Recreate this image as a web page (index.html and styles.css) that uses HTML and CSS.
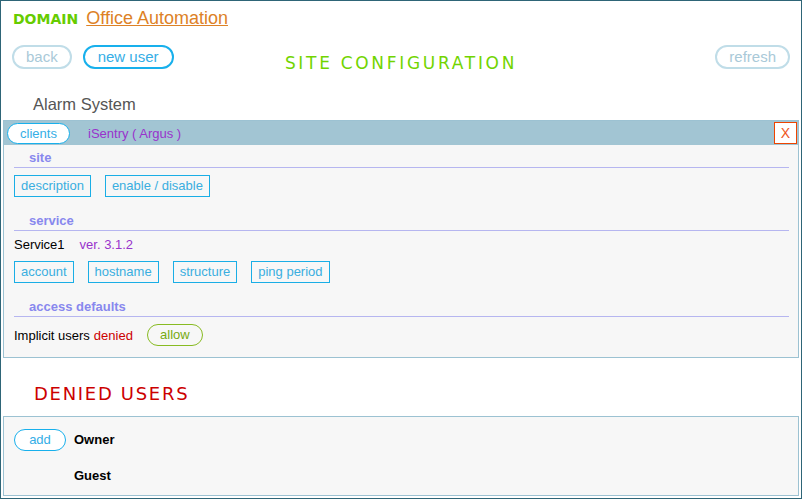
FILE: index.html
```html
<!DOCTYPE html>
<html>
<head>
<meta charset="utf-8">
<link rel="stylesheet" href="styles.css">
</head>
<body>
<div class="frame">
  <div class="domain">
    <span class="domain-label">DOMAIN</span>
    <a class="domain-name" href="#">Office Automation</a>
  </div>
  <div class="toolbar">
    <div class="tb-left">
      <span class="pill pill-muted">back</span>
      <span class="pill pill-wide">new user</span>
    </div>
    <div class="page-title">SITE CONFIGURATION</div>
    <div class="tb-right">
      <span class="pill pill-muted">refresh</span>
    </div>
  </div>
  <div class="system-name">Alarm System</div>

  <div class="panel">
    <div class="panel-head">
      <span class="pill pill-small">clients</span>
      <span class="client-name">iSentry ( Argus )</span>
      <span class="close-btn">X</span>
    </div>

    <div class="sec-title">site</div>
    <div class="btn-row">
      <span class="rbtn">description</span>
      <span class="rbtn">enable / disable</span>
    </div>

    <div class="sec-title">service</div>
    <div class="info-row">
      <span class="plain">Service1</span>
      <span class="version">ver. 3.1.2</span>
    </div>
    <div class="btn-row">
      <span class="rbtn">account</span>
      <span class="rbtn">hostname</span>
      <span class="rbtn">structure</span>
      <span class="rbtn">ping period</span>
    </div>

    <div class="sec-title">access defaults</div>
    <div class="access-row">
      <span class="plain">Implicit users</span>
      <span class="denied">denied</span>
      <span class="pill pill-small pill-green">allow</span>
    </div>
  </div>

  <div class="denied-title">DENIED USERS</div>

  <div class="panel panel-users">
    <div class="users">
      <span class="pill pill-small">add</span>
      <span class="user">Owner</span>
      <span></span>
      <span class="user">Guest</span>
    </div>
  </div>
</div>
</body>
</html>
```

FILE: styles.css
```css
html, body {
  margin: 0;
  padding: 0;
  background: #ffffff;
}

.frame {
  box-sizing: border-box;
  width: 802px;
  height: 499px;
  border: 1px solid #2e6577;
  display: flex;
  flex-direction: column;
  font-family: "Liberation Sans", Arial, sans-serif;
  font-size: 13px;
  color: #000;
}

.domain {
  padding: 7px 0 0 12px;
  height: 20px;
  line-height: 20px;
  display: flex;
  align-items: baseline;
  gap: 8px;
}

.domain-label {
  font-family: "DejaVu Sans", Verdana, sans-serif;
  font-weight: bold;
  font-size: 14px;
  color: #66cc00;
}

.domain-name {
  font-size: 18px;
  color: #dd8126;
  text-decoration: underline;
}

.toolbar {
  margin-top: 17px;
  padding: 0 11px;
  display: grid;
  grid-template-columns: 1fr auto 1fr;
  height: 24px;
}

.tb-left {
  display: flex;
  gap: 11px;
}

.tb-right {
  display: flex;
  justify-content: flex-end;
}

.pill {
  box-sizing: border-box;
  height: 24px;
  line-height: 20px;
  padding: 0 12px;
  border: 2px solid #18b0ec;
  border-radius: 12px;
  color: #35aee6;
  font-size: 15px;
  background: #fff;
  display: inline-block;
}

.pill-wide {
  padding: 0 13px;
}

.pill-muted {
  border-color: #c0dde8;
  color: #a9c9d8;
}

.page-title {
  font-family: "DejaVu Sans", Verdana, sans-serif;
  font-size: 17px;
  letter-spacing: 2.7px;
  color: #72d400;
  line-height: 22px;
  margin-top: 7px;
}

.system-name {
  margin-top: 25px;
  padding-left: 32px;
  line-height: 20px;
  font-size: 16.5px;
  color: #555555;
  margin-bottom: 6px;
}

.panel {
  margin: 0 2px;
  border: 1px solid #9cc2d2;
  background: #f7f7f7;
  padding-bottom: 11px;
}

.panel-head {
  height: 24px;
  background: #a2c5d3;
  display: flex;
  align-items: center;
  padding: 0 1px 0 3px;
}

.pill-small {
  height: 21px;
  line-height: 19px;
  border-width: 1px;
  border-radius: 11px;
  font-size: 13px;
  padding: 0 12px;
  text-align: center;
}

.panel-head .pill-small {
  width: 63px;
  padding: 0;
}

.client-name {
  margin-left: 18px;
  color: #9933cc;
  font-size: 13px;
}

.close-btn {
  margin-left: auto;
  box-sizing: border-box;
  width: 23px;
  height: 22px;
  border: 1px solid #ee4400;
  background: #fff;
  color: #ee5522;
  font-size: 14px;
  text-align: center;
  line-height: 20px;
}

.sec-title {
  margin: 0 9px 0 10px;
  padding: 15px 0 0 15px;
  line-height: 18px;
  font-weight: bold;
  color: #8888ee;
  border-bottom: 1px solid #b6b6f0;
}

.panel-head + .sec-title {
  padding-top: 4px;
}

.btn-row {
  margin: 7px 0 0 10px;
  display: flex;
  gap: 14px;
}

.rbtn {
  box-sizing: border-box;
  height: 22px;
  line-height: 20px;
  padding: 0 6px;
  border: 1px solid #1aaee6;
  color: #3aaee0;
  font-size: 13px;
}

.info-row {
  margin: 5px 0 0 10px;
  line-height: 18px;
  display: flex;
  gap: 15px;
}

.version {
  color: #9933cc;
}

.access-row {
  margin: 7px 0 0 10px;
  display: flex;
  align-items: center;
  height: 22px;
}

.denied {
  color: #cc0000;
  margin-left: 4px;
}

.pill-green {
  margin-left: 14px;
  border-color: #88bb22;
  color: #77aa11;
  height: 22px;
  line-height: 20px;
  width: 56px;
  padding: 0;
  background: transparent;
}

.denied-title {
  margin-top: 24px;
  padding-left: 33px;
  line-height: 24px;
  margin-bottom: 10px;
  font-family: "DejaVu Sans", Verdana, sans-serif;
  font-size: 18px;
  letter-spacing: 1.7px;
  color: #cc0000;
}

.panel-users {
  flex: 1;
  margin-bottom: 2px;
  padding: 12px 0 0 10px;
}

.users {
  display: grid;
  grid-template-columns: 52px auto;
  column-gap: 8px;
  row-gap: 14px;
  align-items: center;
}

.users .pill-small {
  width: 52px;
  height: 22px;
  line-height: 20px;
  padding: 0;
}

.user {
  font-weight: bold;
  line-height: 22px;
}
```
